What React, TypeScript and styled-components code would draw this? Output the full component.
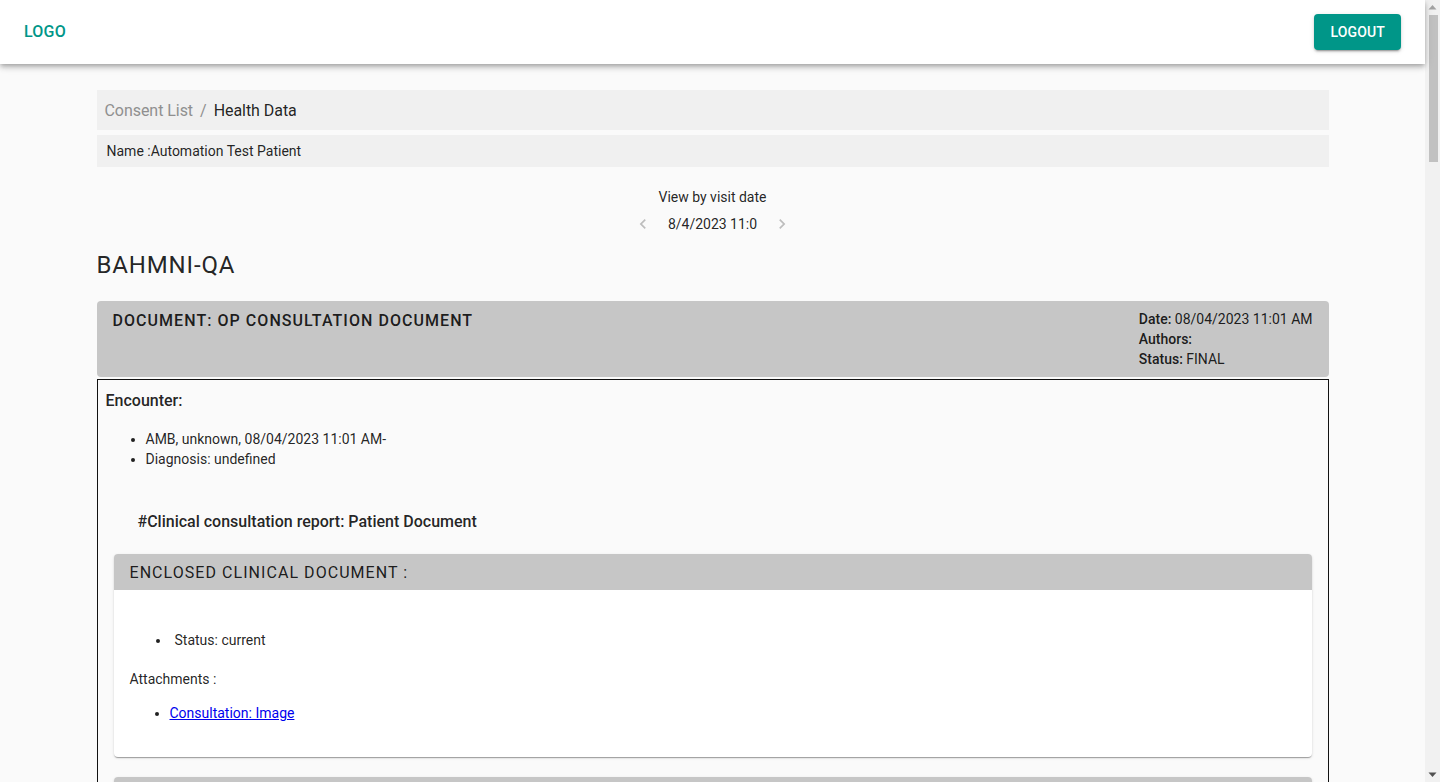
import React from "react";
import styled, { createGlobalStyle } from "styled-components";

const GlobalStyle = createGlobalStyle`
  html, body {
    margin: 0;
    padding: 0;
    background: #fafafa;
    font-family: Roboto, "Liberation Sans", Arial, sans-serif;
    color: rgba(0, 0, 0, 0.87);
  }
  * { box-sizing: border-box; }
`;

const Shell = styled.div`
  display: flex;
  align-items: flex-start;
`;

const Page = styled.div`
  flex: 1;
  min-width: 0;
`;

const ScrollRail = styled.div`
  position: sticky;
  top: 0;
  width: 15px;
  height: 100vh;
  flex-shrink: 0;
  background: #f1f1f1;
  display: flex;
  flex-direction: column;
  align-items: center;
`;

const RailArrow = styled.svg<{ $dark?: boolean }>`
  width: 15px;
  height: 15px;
  flex-shrink: 0;
  fill: ${(p) => (p.$dark ? "#505050" : "#a3a3a3")};
`;

const RailThumb = styled.div`
  width: 9px;
  height: 147px;
  margin-left: 1px;
  background: #c1c1c1;
`;

const RailSpacer = styled.div`
  flex: 1;
`;

const Header = styled.header`
  height: 64px;
  background: #fff;
  display: flex;
  align-items: center;
  justify-content: space-between;
  padding: 0 24px;
  box-shadow: 0px 2px 4px -1px rgba(0, 0, 0, 0.2), 0px 4px 5px 0px rgba(0, 0, 0, 0.14),
    0px 1px 10px 0px rgba(0, 0, 0, 0.12);
  position: relative;
  z-index: 2;
`;

const Logo = styled.div`
  color: #009688;
  font-weight: 500;
  font-size: 16px;
  letter-spacing: 0.2px;
  margin-top: -2px;
`;

const LogoutButton = styled.button`
  background: #009688;
  color: #fff;
  border: none;
  border-radius: 4px;
  height: 36px;
  padding: 0 16px;
  font-family: inherit;
  font-weight: 500;
  font-size: 14px;
  letter-spacing: 0.15px;
  text-transform: uppercase;
  margin-top: -1px;
  box-shadow: 0px 3px 1px -2px rgba(0, 0, 0, 0.2), 0px 2px 2px 0px rgba(0, 0, 0, 0.14),
    0px 1px 5px 0px rgba(0, 0, 0, 0.12);
  cursor: pointer;
`;

const Main = styled.main`
  max-width: 1280px;
  margin: 0 auto;
  padding: 26px 24px 40px;
`;

const Breadcrumb = styled.nav`
  height: 40px;
  background: #f0f0f0;
  display: flex;
  align-items: center;
  padding: 0 8px;
  font-size: 16px;
  gap: 7px;
`;

const Crumb = styled.span<{ $active?: boolean }>`
  color: ${(p) => (p.$active ? "rgba(0,0,0,0.87)" : "#8f8f8f")};
  letter-spacing: -0.05px;
`;

const NameBar = styled.div`
  margin-top: 5px;
  height: 32px;
  background: #f0f0f0;
  display: flex;
  align-items: center;
  padding: 0 10px;
  font-size: 14px;
`;

const VisitNav = styled.div`
  margin-top: 20px;
  display: flex;
  flex-direction: column;
  align-items: center;
  font-size: 14px;
`;

const VisitLabel = styled.div`
  line-height: 20px;
`;

const DateRow = styled.div`
  margin-top: 7px;
  display: flex;
  align-items: center;
  gap: 15px;
  height: 20px;
`;

const Chevron = styled.svg`
  width: 20px;
  height: 20px;
  fill: #bdbdbd;
`;

const Facility = styled.h2`
  margin: 14px 0 0;
  font-size: 24px;
  font-weight: 400;
  line-height: 34px;
  letter-spacing: 0.85px;
`;

const DocHeader = styled.div`
  margin-top: 19px;
  background: #c6c6c6;
  border-radius: 4px;
  min-height: 76px;
  padding: 8px 16px;
  display: flex;
  justify-content: space-between;
`;

const DocTitle = styled.h3`
  margin: 0;
  font-size: 16px;
  font-weight: 500;
  letter-spacing: 1.05px;
  line-height: 24px;
`;

const DocMeta = styled.div`
  font-size: 14px;
  line-height: 20px;
`;

const Bold = styled.b`
  font-weight: 500;
`;

const DocBody = styled.div`
  margin-top: 2px;
  border: 1px solid #111;
  padding: 9px 8px 40px;
`;

const SectionLabel = styled.div`
  font-size: 16px;
  font-weight: 500;
  line-height: 24px;
`;

const List = styled.ul<{ $indent?: number; $gap?: number }>`
  margin: ${(p) => p.$gap ?? 16}px 0 0;
  padding-left: ${(p) => p.$indent ?? 40}px;
  font-size: 14px;
  line-height: 20px;
`;

const Item = styled.li<{ $pad?: number }>`
  padding-left: ${(p) => p.$pad ?? 0}px;
`;

const ReportTitle = styled.h4`
  margin: 41px 0 0 32px;
  font-size: 16px;
  font-weight: 500;
  line-height: 24px;
`;

const Card = styled.section`
  margin: 20px 8px 0;
  background: #fff;
  border-radius: 4px;
  overflow: hidden;
  box-shadow: 0px 2px 1px -1px rgba(0, 0, 0, 0.2), 0px 1px 1px 0px rgba(0, 0, 0, 0.14),
    0px 1px 3px 0px rgba(0, 0, 0, 0.12);
  & + & {
    margin-top: 20px;
  }
`;

const CardHeader = styled.div`
  height: 36px;
  background: #c6c6c6;
  display: flex;
  align-items: center;
  padding: 0 16px;
  font-size: 16px;
  letter-spacing: 1.05px;
`;

const CardBody = styled.div`
  padding: 24px 16px 34px;
  font-size: 14px;
  line-height: 20px;
`;

const Para = styled.p`
  margin: 19px 0 0;
`;

const Link = styled.a`
  color: #0000ee;
  text-decoration: underline;
`;

type Enclosed = {
  status: string;
  attachments: string[];
};

const enclosed: Enclosed[] = [
  { status: "current", attachments: ["Consultation: Image"] },
  { status: "current", attachments: ["Consultation: Document"] },
  { status: "current", attachments: ["Consultation: Report"] },
  { status: "current", attachments: ["Consultation: Image"] },
  { status: "current", attachments: ["Consultation: Document"] },
  { status: "current", attachments: ["Consultation: Report"] },
];

const EnclosedCard: React.FC<{ doc: Enclosed }> = ({ doc }) => (
  <Card>
    <CardHeader>ENCLOSED CLINICAL DOCUMENT :</CardHeader>
    <CardBody>
      <List $indent={41} $gap={16}>
        <Item $pad={4}>Status: {doc.status}</Item>
      </List>
      <Para>Attachments :</Para>
      <List $indent={40} $gap={14}>
        {doc.attachments.map((a) => (
          <Item key={a}>
            <Link href="#">{a}</Link>
          </Item>
        ))}
      </List>
    </CardBody>
  </Card>
);

export default function App() {
  return (
    <>
      <GlobalStyle />
      <Shell>
        <Page>
          <Header>
            <Logo>LOGO</Logo>
            <LogoutButton>Logout</LogoutButton>
          </Header>
          <Main>
            <Breadcrumb>
              <Crumb>Consent List</Crumb>
              <Crumb>/</Crumb>
              <Crumb $active>Health Data</Crumb>
            </Breadcrumb>
            <NameBar>Name :Automation Test Patient</NameBar>
            <VisitNav>
              <VisitLabel>View by visit date</VisitLabel>
              <DateRow>
                <Chevron viewBox="0 0 24 24">
                  <path d="M15.41 7.41 14 6l-6 6 6 6 1.41-1.41L10.83 12z" />
                </Chevron>
                <span>8/4/2023 11:0</span>
                <Chevron viewBox="0 0 24 24">
                  <path d="M10 6 8.59 7.41 13.17 12l-4.58 4.59L10 18l6-6z" />
                </Chevron>
              </DateRow>
            </VisitNav>
            <Facility>BAHMNI-QA</Facility>
            <DocHeader>
              <DocTitle>DOCUMENT: OP CONSULTATION DOCUMENT</DocTitle>
              <DocMeta>
                <div>
                  <Bold>Date:</Bold> 08/04/2023 11:01 AM
                </div>
                <div>
                  <Bold>Authors:</Bold>
                </div>
                <div>
                  <Bold>Status:</Bold> FINAL
                </div>
              </DocMeta>
            </DocHeader>
            <DocBody>
              <SectionLabel>Encounter:</SectionLabel>
              <List>
                <Item>AMB, unknown, 08/04/2023 11:01 AM-</Item>
                <Item>Diagnosis: undefined</Item>
              </List>
              <ReportTitle>#Clinical consultation report: Patient Document</ReportTitle>
              {enclosed.map((d, i) => (
                <EnclosedCard key={i} doc={d} />
              ))}
            </DocBody>
          </Main>
        </Page>
        <ScrollRail aria-hidden>
          <RailArrow viewBox="0 0 15 15">
            <path d="M3.5 9.5 L7.5 5 L11.5 9.5 Z" />
          </RailArrow>
          <RailThumb />
          <RailSpacer />
          <RailArrow viewBox="0 0 15 15" $dark>
            <path d="M3.5 5.5 L11.5 5.5 L7.5 10 Z" />
          </RailArrow>
        </ScrollRail>
      </Shell>
    </>
  );
}
